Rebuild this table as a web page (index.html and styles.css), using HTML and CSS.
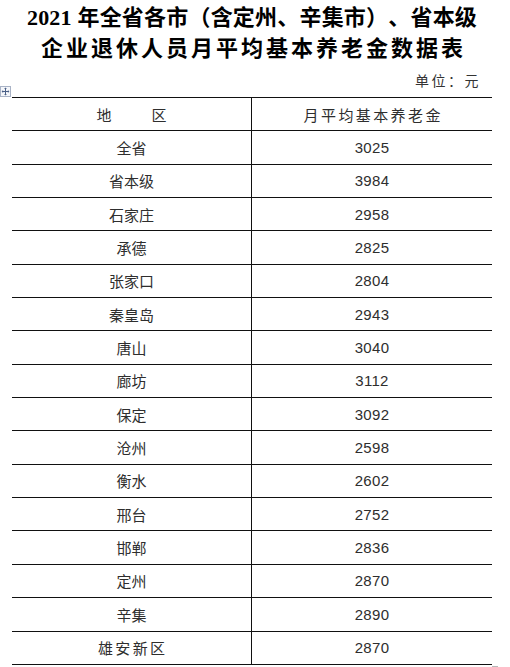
FILE: index.html
```html
<!DOCTYPE html>
<html lang="zh-CN">
<head>
<meta charset="utf-8">
<title>2021年企业退休人员月平均基本养老金数据表</title>
<link rel="stylesheet" href="styles.css">
</head>
<body>
<div class="page">
  <h1 class="title">
    <span class="line1">2021 年全省各市（含定州、辛集市）、省本级</span>
    <span class="line2">企业退休人员月平均基本养老金数据表</span>
  </h1>
  <div class="unit-row">
    <span class="move-handle">
      <svg width="11" height="11" viewBox="0 0 11 11">
        <rect x="0.5" y="0.5" width="10" height="10" fill="#f4f6fa" stroke="#a9b3c6"/>
        <path d="M5.5 2v7M2 5.5h7" stroke="#4a5f86" stroke-width="1"/>
        <path d="M5.5 1.6l-1.4 1.5h2.8zM5.5 9.4l-1.4-1.5h2.8zM1.6 5.5l1.5-1.4v2.8zM9.4 5.5l-1.5-1.4v2.8z" fill="#4a5f86"/>
      </svg>
    </span>
    <span class="unit">单位：元</span>
  </div>
  <div class="table">
    <div class="row head"><div class="cell region">地<span class="gap"></span>区</div><div class="cell value spaced">月平均基本养老金</div></div>
    <div class="row"><div class="cell region">全省</div><div class="cell value">3025</div></div>
    <div class="row"><div class="cell region">省本级</div><div class="cell value">3984</div></div>
    <div class="row"><div class="cell region">石家庄</div><div class="cell value">2958</div></div>
    <div class="row"><div class="cell region">承德</div><div class="cell value">2825</div></div>
    <div class="row"><div class="cell region">张家口</div><div class="cell value">2804</div></div>
    <div class="row"><div class="cell region">秦皇岛</div><div class="cell value">2943</div></div>
    <div class="row"><div class="cell region">唐山</div><div class="cell value">3040</div></div>
    <div class="row"><div class="cell region">廊坊</div><div class="cell value">3112</div></div>
    <div class="row"><div class="cell region">保定</div><div class="cell value">3092</div></div>
    <div class="row"><div class="cell region">沧州</div><div class="cell value">2598</div></div>
    <div class="row"><div class="cell region">衡水</div><div class="cell value">2602</div></div>
    <div class="row"><div class="cell region">邢台</div><div class="cell value">2752</div></div>
    <div class="row"><div class="cell region">邯郸</div><div class="cell value">2836</div></div>
    <div class="row"><div class="cell region">定州</div><div class="cell value">2870</div></div>
    <div class="row"><div class="cell region">辛集</div><div class="cell value">2890</div></div>
    <div class="row"><div class="cell region spaced">雄安新区</div><div class="cell value">2870</div></div>
    <span class="resize-mark"></span>
  </div>
</div>
</body>
</html>
```

FILE: styles.css
```css
html, body {
  margin: 0;
  padding: 0;
  background: #ffffff;
}

.page {
  width: 510px;
  height: 667px;
  overflow: hidden;
  font-family: "Noto Sans CJK SC", sans-serif;
  color: #2a2a2a;
  text-spacing-trim: space-all;
}

.title {
  margin: 0;
  padding: 2px 18px 0 12px;
  display: flex;
  flex-direction: column;
  align-items: center;
  font-family: "Liberation Serif", "Noto Sans CJK SC", serif;
  font-weight: 700;
  font-size: 22px;
  line-height: 31px;
  color: #000;
  text-spacing-trim: space-all;
}

.title .line1 {
  letter-spacing: 0.2px;
  white-space: nowrap;
}

.title .line2 {
  letter-spacing: 3px;
  margin-right: -3px;
}

.unit-row {
  height: 33px;
  display: flex;
  align-items: center;
  justify-content: space-between;
  position: relative;
}

.move-handle {
  position: absolute;
  left: 0;
  top: 22px;
  width: 11px;
  height: 11px;
  line-height: 0;
}

.unit {
  margin-left: auto;
  padding-right: 29px;
  margin-top: -1px;
  font-size: 14px;
  letter-spacing: 2.5px;
  color: #333;
}

.table {
  position: relative;
  margin-left: 12px;
  width: 480px;
  border-top: 1px solid #111;
}

.row {
  display: grid;
  grid-template-columns: 239px 1px 240px;
  height: 32.35px;
  border-bottom: 1px solid #111;
}

.row::before {
  content: "";
  grid-column: 2;
  grid-row: 1;
  background: #111;
}

.cell {
  grid-row: 1;
  display: flex;
  align-items: center;
  justify-content: center;
  font-size: 15px;
  color: #2e2e2e;
}

.cell.region {
  grid-column: 1;
}

.cell.value {
  grid-column: 3;
  font-family: "Liberation Sans Narrow", "Liberation Sans", "Noto Sans CJK SC", sans-serif;
  font-size: 15px;
  letter-spacing: 0.3px;
}

.head .cell.value {
  font-family: "Noto Sans CJK SC", sans-serif;
}

.cell.spaced {
  letter-spacing: 2.4px;
  text-indent: 2.4px;
}

.gap {
  display: inline-block;
  width: 40px;
}

.resize-mark {
  position: absolute;
  right: -6px;
  bottom: -2px;
  width: 6px;
  height: 1px;
  background: #b8b8b8;
}
```
